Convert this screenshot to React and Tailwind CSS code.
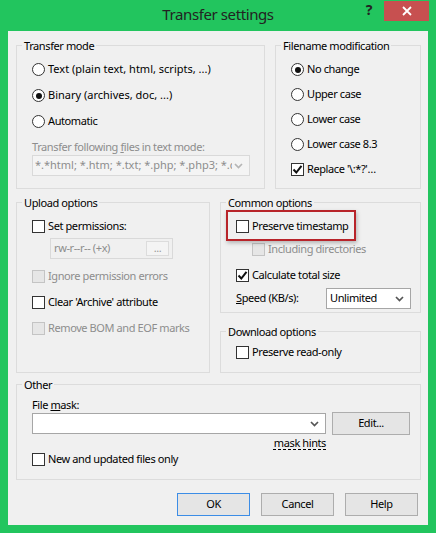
import { useState } from "react";

// tick used by the checked checkboxes
function Tick() {
  return (
    <svg width="11" height="11" viewBox="0 0 11 11">
      <path d="M1.5 5.5l2.8 3L9.5 1.8" stroke="#111" strokeWidth="2" fill="none" />
    </svg>
  );
}

function Chevron({ color = "#555" }) {
  return (
    <svg width="9" height="6" viewBox="0 0 9 6">
      <path d="M1 1l3.5 3.5L8 1" stroke={color} strokeWidth="1.7" fill="none" />
    </svg>
  );
}

function Radio({ checked, label, className = "" }) {
  return (
    <div className={`flex items-center h-[17px] gap-[3px] ${className}`}>
      <span className="w-[13px] h-[13px] rounded-full border border-[#333] bg-white flex items-center justify-center">
        {checked && <span className="w-[6px] h-[6px] rounded-full bg-[#111]" />}
      </span>
      <span>{label}</span>
    </div>
  );
}

function Check({ checked, disabled, label, className = "" }) {
  return (
    <div className={`flex items-center h-[17px] gap-[3px] ${className}`}>
      <span
        className={
          disabled
            ? "w-[13px] h-[13px] border border-[#c4c4c4] bg-[#e6e6e6]"
            : "w-[13px] h-[13px] border border-[#333] bg-white flex items-center justify-center"
        }
      >
        {checked && <Tick />}
      </span>
      <span className={disabled ? "text-[#8d8d8d]" : ""}>{label}</span>
    </div>
  );
}

function Group({ title, className, children }) {
  return (
    <fieldset className={`border border-[#dcdcdc] ${className}`}>
      <legend className="ml-[5px] px-[2px] leading-[15px]">{title}</legend>
      {children}
    </fieldset>
  );
}

function Button({ label, primary }) {
  return (
    <button
      className={
        primary
          ? "w-[73px] h-[23px] border border-[#3c8de6] bg-[#e5e5e5] text-center"
          : "w-[73px] h-[23px] border border-[#adadad] bg-[#e5e5e5] text-center"
      }
    >
      {label}
    </button>
  );
}

export default function App() {
  const [mode] = useState("binary");

  return (
    <div className="w-[436px] h-[533px] bg-[#22c55e] flex flex-col font-['Noto_Sans',sans-serif] text-[11px] tracking-[-0.4px] text-black">
      {/* title bar */}
      <div className="h-[31px] grid grid-cols-[1fr_auto_1fr]">
        <div />
        <div className="pt-[4px] text-[15px] leading-[20px] text-[#222]">Transfer settings</div>
        <div className="flex justify-end items-start pr-[7px]">
          <span className="mt-[3px] mr-[12px] text-[14px] leading-[14px] font-bold text-[#222]">?</span>
          <div className="mt-[1px] w-[45px] h-[20px] bg-[#c75050] flex items-center justify-center">
            <svg width="10" height="10" viewBox="0 0 10 10">
              <path d="M1 1l8 8M9 1l-8 8" stroke="#fff" strokeWidth="1.8" />
            </svg>
          </div>
        </div>
      </div>

      <div className="ml-[8px] w-[420px] h-[494px] bg-[#f0f0f0] pl-[8px] pt-[7px] flex flex-col">
        <div className="flex gap-[10px]">
          <Group title="Transfer mode" className="w-[249px] h-[151px]">
            <div className="pt-[8px] pl-[15px] flex flex-col">
              <div className="flex flex-col gap-[9px]">
                <Radio label="Text (plain text, html, scripts, ...)" checked={mode === "text"} className="tracking-normal" />
                <Radio label="Binary (archives, doc, ...)" checked={mode === "binary"} className="tracking-normal" />
                <Radio label="Automatic" checked={mode === "auto"} />
              </div>
              <div className="mt-[9px] leading-[15px] text-[#8d8d8d]">
                Transfer following <span className="underline">f</span>iles in text mode:
              </div>
              <div className="mt-[1px] w-[218px] h-[21px] border border-[#d9d9d9] bg-[#f4f4f4] flex items-center pl-[2px] pr-[6px] gap-[2px]">
                <span className="flex-1 overflow-hidden whitespace-nowrap tracking-normal text-[#8d8d8d]">
                  *.*html; *.htm; *.txt; *.php; *.php3; *.cgi; *.c; *.cpp
                </span>
                <Chevron color="#b5b5b5" />
              </div>
            </div>
          </Group>

          <Group title="Filename modification" className="w-[146px] h-[151px]">
            <div className="pt-[8px] pl-[15px] flex flex-col gap-[8px]">
              <Radio label="No change" checked />
              <Radio label="Upper case" />
              <Radio label="Lower case" />
              <Radio label="Lower case 8.3" />
              <Check label="Replace '\:*?'…" checked />
            </div>
          </Group>
        </div>

        <div className="mt-[6px] flex gap-[10px]">
          <Group title="Upload options" className="w-[194px] h-[178px]">
            <div className="pt-[8px] pl-[15px] flex flex-col">
              <Check label="Set permissions:" />
              <div className="mt-[3px] ml-[18px] w-[123px] h-[21px] border border-[#d9d9d9] bg-[#f0f0f0] flex items-center pl-[3px] pr-[3px]">
                <span className="flex-1 text-[#8d8d8d]">rw-r--r-- (+x)</span>
                <span className="w-[23px] h-[15px] border border-[#dcdcdc] bg-[#f4f4f4] text-[#9a9a9a] text-center leading-[11px]">...</span>
              </div>
              <div className="mt-[9px] flex flex-col gap-[9px]">
                <Check label="Ignore permission errors" disabled />
                <Check label="Clear 'Archive' attribute" />
                <Check label="Remove BOM and EOF marks" disabled />
              </div>
            </div>
          </Group>

          <div className="flex flex-col">
            <Group title="Common options" className="w-[201px] h-[118px]">
              <div className="relative pt-[8px] pl-[15px] flex flex-col">
                <Check label="Preserve timestamp" />
                <Check label="Including directories" disabled className="mt-[6px] ml-[16px]" />
                <Check label="Calculate total size" checked className="mt-[9px]" />
                <div className="mt-[4px] flex items-center h-[21px]">
                  <span className="w-[90px]">
                    <span className="underline">S</span>peed (KB/s):
                  </span>
                  <div className="w-[85px] h-[21px] border border-[#a6a6a6] bg-white flex items-center pl-[3px] pr-[6px]">
                    <span className="flex-1">Unlimited</span>
                    <Chevron />
                  </div>
                </div>
                {/* highlight frame around the timestamp option */}
                <div className="absolute left-[5px] top-0 w-[130px] h-[31px] border-2 border-[#b8242a] shadow-[1px_2px_4px_rgba(0,0,0,0.25)]" />
              </div>
            </Group>

            <Group title="Download options" className="mt-[11px] w-[201px] h-[49px]">
              <div className="pt-[5px] pl-[15px]">
                <Check label="Preserve read-only" />
              </div>
            </Group>
          </div>
        </div>

        <Group title="Other" className="mt-[4px] w-[405px] h-[103px]">
          <div className="pt-[6px] pl-[15px] flex flex-col">
            <div className="leading-[14px]">
              File <span className="underline">m</span>ask:
            </div>
            <div className="flex items-center h-[23px]">
              <div className="w-[294px] h-[21px] border border-[#a6a6a6] bg-white flex items-center justify-end pr-[6px]">
                <Chevron />
              </div>
              <button className="ml-[6px] w-[78px] h-[23px] border border-[#adadad] bg-[#e5e5e5]">Edit...</button>
            </div>
            <div className="mt-[1px] w-[294px] text-right leading-[14px]">
              <span className="underline decoration-dashed underline-offset-2">mask hints</span>
            </div>
            <Check label="New and updated files only" className="mt-[1px]" />
          </div>
        </Group>

        <div className="mt-[13px] pr-[10px] flex justify-end gap-[11px]">
          <Button label="OK" primary />
          <Button label="Cancel" />
          <Button label="Help" />
        </div>
      </div>
    </div>
  );
}
